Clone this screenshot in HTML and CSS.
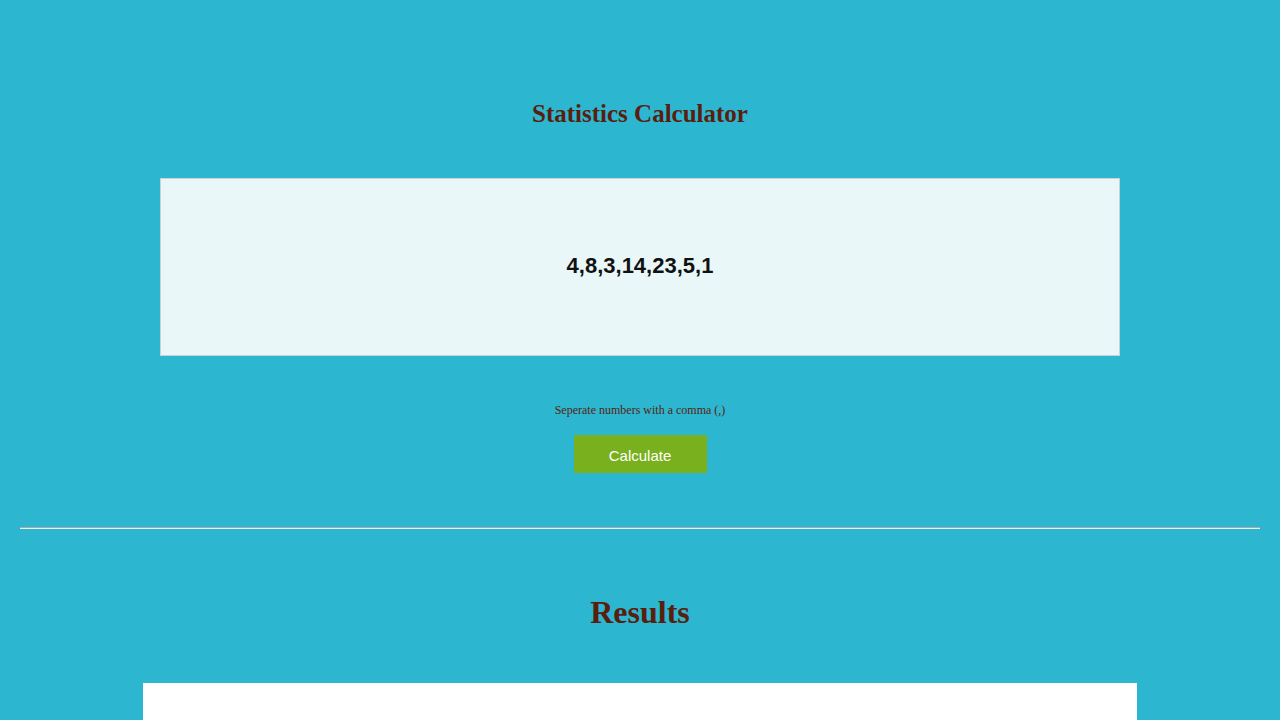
FILE: index.html
```html
<!DOCTYPE html>
<html lang="en">
<head>
    <meta charset="UTF-8">
    <title>Statistics Calculator</title>
    <link rel="stylesheet" href="styles.css">
</head>
<body>
    <div class="calculator">
        <h2 class="title">Statistics Calculator</h2>
        <input type="text" id="numbers" class="numbers" value="4,8,3,14,23,5,1" autofocus>
        <p class="hint">Seperate numbers with a comma (,)</p>
        <button class="calc-btn" onclick="calculate()">Calculate</button>
    </div>

    <hr class="divider">

    <div class="results">
        <h1 class="results-title">Results</h1>
        <div class="results-box" id="results"></div>
    </div>

    <script>
        var field = document.getElementById('numbers');
        field.focus();
        field.setSelectionRange(0, 0);

        function calculate() {
            var nums = field.value.split(',').map(Number).filter(function (n) { return !isNaN(n); });
            var box = document.getElementById('results');
            if (!nums.length) { box.textContent = ''; return; }
            var sum = nums.reduce(function (a, b) { return a + b; }, 0);
            var mean = sum / nums.length;
            box.textContent = 'Count: ' + nums.length + '  Sum: ' + sum + '  Mean: ' + mean.toFixed(2);
        }
    </script>
</body>
</html>
```

FILE: styles.css
```css
body {
    margin: 0;
    padding: 0 20px;
    background: #2cb6cf;
    font-family: 'Liberation Serif', 'Times New Roman', serif;
    color: #5a1e0f;
    overflow: hidden;
}
.calculator {
    display: flex;
    flex-direction: column;
    align-items: center;
    padding-top: 100px;
}
.title {
    font-size: 25px;
    line-height: 28px;
    margin: 0 0 50px;
}
.numbers {
    width: 960px;
    height: 178px;
    box-sizing: border-box;
    padding: 0 0 2px;
    background: #e9f7f9;
    border: 1px solid #c6d4d8;
    outline: none;
    text-align: center;
    font-family: 'Liberation Sans', Arial, sans-serif;
    font-size: 22px;
    font-weight: bold;
    color: #111;
    caret-color: #111;
}
.hint {
    font-size: 12px;
    line-height: 14px;
    margin: 47px 0 18px;
}
.calc-btn {
    width: 133px;
    height: 38px;
    padding: 2px 0 0;
    background: #78b01e;
    color: #fff;
    border: none;
    font-family: 'Liberation Sans', Arial, sans-serif;
    font-size: 15px;
    cursor: pointer;
}
.calc-btn:hover {
    background: #6a9c1a;
}
.divider {
    margin: 54px 0 0;
    border: none;
    border-top: 1px solid #a9a9a9;
    border-bottom: 1px solid #f0f0f0;
}
.results {
    display: flex;
    flex-direction: column;
    align-items: center;
}
.results-title {
    font-size: 32px;
    line-height: 37px;
    margin: 65px 0 52px;
}
.results-box {
    width: 994px;
    height: 200px;
    background: #fff;
}
```
